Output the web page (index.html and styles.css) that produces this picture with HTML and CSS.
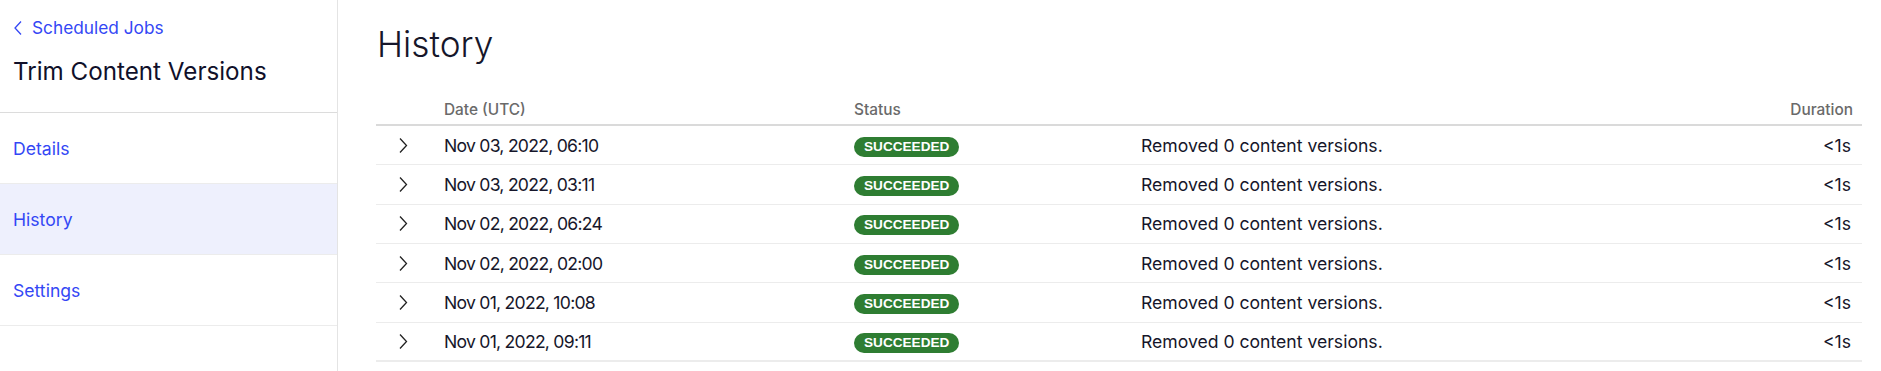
FILE: index.html
```html
<!DOCTYPE html>
<html>
<head>
<meta charset="utf-8">
<link rel="stylesheet" href="styles.css">
</head>
<body>
<div class="app">
  <aside class="sidebar">
    <div class="sidebar-head">
      <a class="back" href="#">
        <svg class="back-icon" width="10" height="16" viewBox="0 0 10 16"><path d="M8 1.5 L2 8 L8 14.5" fill="none" stroke="currentColor" stroke-width="1.3"/></svg>
        <span>Scheduled Jobs</span>
      </a>
      <h1 class="job-title">Trim Content Versions</h1>
    </div>
    <nav class="nav">
      <a class="nav-item" href="#">Details</a>
      <a class="nav-item active" href="#">History</a>
      <a class="nav-item" href="#">Settings</a>
    </nav>
  </aside>
  <main class="main">
    <h2 class="page-title">History</h2>
    <div class="table">
      <div class="row head">
        <div class="c-exp"></div>
        <div class="c-date">Date (UTC)</div>
        <div class="c-status">Status</div>
        <div class="c-msg"></div>
        <div class="c-dur">Duration</div>
      </div>
      <div class="row">
        <div class="c-exp"><svg width="10" height="17" viewBox="0 0 10 17"><path d="M2 1.5 L8.5 8.5 L2 15.5" fill="none" stroke="currentColor" stroke-width="1.3"/></svg></div>
        <div class="c-date">Nov 03, 2022, 06:10</div>
        <div class="c-status"><span class="badge">SUCCEEDED</span></div>
        <div class="c-msg">Removed 0 content versions.</div>
        <div class="c-dur">&lt;1s</div>
      </div>
      <div class="row">
        <div class="c-exp"><svg width="10" height="17" viewBox="0 0 10 17"><path d="M2 1.5 L8.5 8.5 L2 15.5" fill="none" stroke="currentColor" stroke-width="1.3"/></svg></div>
        <div class="c-date">Nov 03, 2022, 03:11</div>
        <div class="c-status"><span class="badge">SUCCEEDED</span></div>
        <div class="c-msg">Removed 0 content versions.</div>
        <div class="c-dur">&lt;1s</div>
      </div>
      <div class="row">
        <div class="c-exp"><svg width="10" height="17" viewBox="0 0 10 17"><path d="M2 1.5 L8.5 8.5 L2 15.5" fill="none" stroke="currentColor" stroke-width="1.3"/></svg></div>
        <div class="c-date">Nov 02, 2022, 06:24</div>
        <div class="c-status"><span class="badge">SUCCEEDED</span></div>
        <div class="c-msg">Removed 0 content versions.</div>
        <div class="c-dur">&lt;1s</div>
      </div>
      <div class="row">
        <div class="c-exp"><svg width="10" height="17" viewBox="0 0 10 17"><path d="M2 1.5 L8.5 8.5 L2 15.5" fill="none" stroke="currentColor" stroke-width="1.3"/></svg></div>
        <div class="c-date">Nov 02, 2022, 02:00</div>
        <div class="c-status"><span class="badge">SUCCEEDED</span></div>
        <div class="c-msg">Removed 0 content versions.</div>
        <div class="c-dur">&lt;1s</div>
      </div>
      <div class="row">
        <div class="c-exp"><svg width="10" height="17" viewBox="0 0 10 17"><path d="M2 1.5 L8.5 8.5 L2 15.5" fill="none" stroke="currentColor" stroke-width="1.3"/></svg></div>
        <div class="c-date">Nov 01, 2022, 10:08</div>
        <div class="c-status"><span class="badge">SUCCEEDED</span></div>
        <div class="c-msg">Removed 0 content versions.</div>
        <div class="c-dur">&lt;1s</div>
      </div>
      <div class="row last">
        <div class="c-exp"><svg width="10" height="17" viewBox="0 0 10 17"><path d="M2 1.5 L8.5 8.5 L2 15.5" fill="none" stroke="currentColor" stroke-width="1.3"/></svg></div>
        <div class="c-date">Nov 01, 2022, 09:11</div>
        <div class="c-status"><span class="badge">SUCCEEDED</span></div>
        <div class="c-msg">Removed 0 content versions.</div>
        <div class="c-dur">&lt;1s</div>
      </div>
    </div>
  </main>
</div>
</body>
</html>
```
FILE: styles.css
```css
* { box-sizing: border-box; }
html, body { margin: 0; padding: 0; background: #fff; }
body {
  font-family: Inter, "Noto Sans", sans-serif;
  font-variant-numeric: proportional-nums;
  color: #16162a;
  height: 371px;
  overflow: hidden;
}
.app { display: flex; height: 371px; }
.sidebar {
  width: 338px;
  flex: 0 0 338px;
  border-right: 1px solid #e4e4e4;
}
.sidebar-head {
  padding: 17px 0 0 13px;
  height: 113px;
  border-bottom: 1px solid #dcdcdc;
}
.back {
  display: flex;
  align-items: center;
  gap: 9px;
  color: #3447f5;
  text-decoration: none;
  font-size: 17.3px;
  line-height: 22px;
}
.back-icon { color: #3447f5; }
.job-title {
  margin: 18px 0 0 0;
  font-size: 24.2px;
  font-weight: 400;
  line-height: 30px;
  color: #10102a;
}
.nav { display: flex; flex-direction: column; }
.nav-item {
  display: flex;
  align-items: center;
  height: 71px;
  padding-left: 13px;
  color: #3447f5;
  text-decoration: none;
  font-size: 17.6px;
  border-bottom: 1px solid #ececec;
}
.nav-item.active { background: #eef0fd; }
.main {
  flex: 1;
  padding: 0 19px 0 38px;
}
.page-title {
  margin: 21px 0 0 1px;
  font-weight: 300;
  font-size: 35.2px;
  line-height: 46px;
  color: #16162a;
}
.table { margin-top: 28px; }
.row {
  display: grid;
  grid-template-columns: 68px 410px 287px 1fr 120px;
  align-items: center;
  height: 39.33px;
  border-bottom: 1px solid #ececec;
  font-size: 17.6px;
}
.row.head {
  height: 31px;
  border-bottom: 2px solid #dadada;
  font-size: 15.4px;
  color: #6a6a6a;
  font-weight: 500;
  align-items: center;
}
.row.last { border-bottom: 2px solid #ececec; }
.c-exp { display: flex; padding-left: 22px; color: #222; }
.c-date { letter-spacing: -0.75px; }
.row.head .c-date { letter-spacing: 0; }
.c-dur { text-align: right; padding-right: 11px; }
.row.head .c-dur { padding-right: 9px; }
.badge {
  display: inline-block;
  background: #2e7d32;
  color: #fff;
  font-family: "Liberation Sans", Arial, sans-serif;
  font-weight: 700;
  font-size: 13.6px;
  line-height: 20px;
  height: 20px;
  padding: 0 10px;
  border-radius: 10px;
}
```
